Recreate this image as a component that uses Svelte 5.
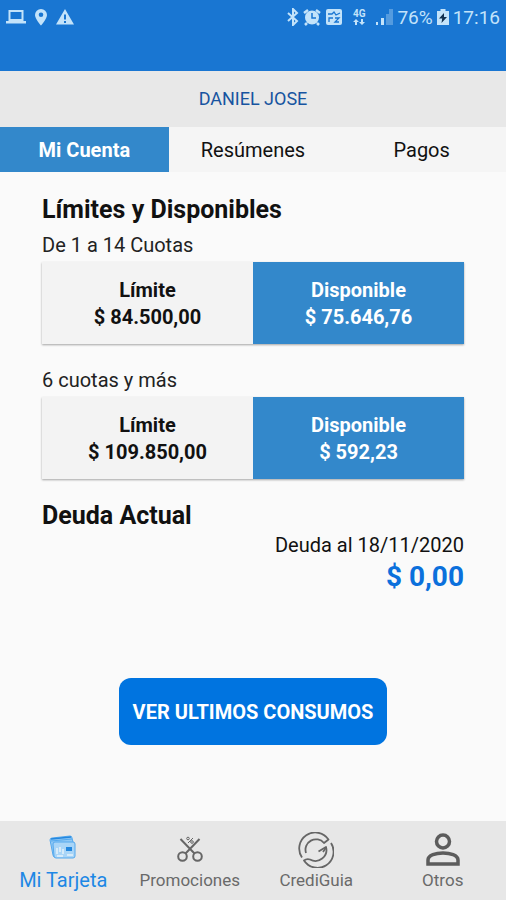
<script>
  const tabs = ['Mi Cuenta', 'Resúmenes', 'Pagos'];
  let tab = $state('Mi Cuenta');

  const limits = [
    { title: 'De 1 a 14 Cuotas', limit: '$ 84.500,00', available: '$ 75.646,76' },
    { title: '6 cuotas y más', limit: '$ 109.850,00', available: '$ 592,23' }
  ];

  const sections = [
    { name: 'Mi Tarjeta', icon: 'card' },
    { name: 'Promociones', icon: 'scissors' },
    { name: 'CrediGuia', icon: 'guide' },
    { name: 'Otros', icon: 'person' }
  ];
  let section = $state('Mi Tarjeta');
</script>

<div class="app">
  <header>
    <div class="status">
      <div class="group left">
        <svg width="20" height="18" viewBox="0 0 20 18"><path d="M3.500 3h13v9h-13z" fill="none" stroke="currentColor" stroke-width="2" /><path d="M0 13h20v2.500H0z" fill="currentColor" /></svg>
        <svg width="12" height="18" viewBox="0 0 12 18"><path fill="currentColor" fill-rule="evenodd" d="M6 1a6 6 0 0 0-6 6c0 4 6 10.500 6 10.500S12 11 12 7a6 6 0 0 0-6-6zm0 3.500a2.300 2.300 0 1 1 0 4.600 2.300 2.300 0 0 1 0-4.600z" /></svg>
        <svg width="18" height="18" viewBox="0 0 18 18"><path fill="currentColor" fill-rule="evenodd" d="M9 1l9 15.500H0zM8 6.500v5h2v-5zm0 6.500v2h2v-2z" /></svg>
      </div>
      <div class="group right">
        <svg width="12" height="18" viewBox="0 0 12 18"><path d="M1 5l9 8-4 4V1l4 4-9 8" fill="none" stroke="currentColor" stroke-width="2" /></svg>
        <svg width="18" height="18" viewBox="0 0 18 18"><circle cx="9" cy="9.500" r="7" fill="currentColor" /><path d="M1 5l4-3M17 5l-4-3M4 15l-2 2M14 15l2 2" stroke="currentColor" stroke-width="2.500" /><path d="M9 5v5h4" fill="none" stroke="#1976d2" stroke-width="1.500" /></svg>
        <svg width="18" height="18" viewBox="0 0 18 18"><rect x="1" y="1" width="16" height="16" rx="2" fill="currentColor" /><path d="M3 6h4l2-2 2 3 4-2M4 14v-4h4M10 10h4l-4 4h4" fill="none" stroke="#1976d2" stroke-width="1.300" /></svg>
        <span class="network"><small>4G</small><svg width="12" height="6" viewBox="0 0 12 6"><path d="M3 0l3 3H4v3H2V3H0zM9 6L6 3h2V0h2v3h2z" fill="currentColor" /></svg></span>
        <svg width="18" height="18" viewBox="0 0 18 18"><path d="M1 14h2v3H1zM6 10h3v7H6z" fill="currentColor" /><path d="M11 6h3v11h-3zM14 1h4v16h-4z" fill="currentColor" opacity=".35" /></svg>
        <span>76%</span>
        <svg width="12" height="18" viewBox="0 0 12 18"><path d="M3.500 1h5v2H12v14H0V3h3.500z" fill="currentColor" /><path d="M7 5L2 10.500h3.200L4.500 15 10 9H7z" fill="#12314f" /></svg>
        <time>17:16</time>
      </div>
    </div>
  </header>

  <div class="holder">DANIEL JOSE</div>

  <div class="tabs" role="tablist">
    {#each tabs as name}
      <button role="tab" aria-selected={tab === name} class:active={tab === name} onclick={() => (tab = name)}>{name}</button>
    {/each}
  </div>

  <main>
    <h2>Límites y Disponibles</h2>
    {#each limits as item}
      <section class="limit">
        <h3>{item.title}</h3>
        <div class="pair">
          <div class="cell">Límite<br />{item.limit}</div>
          <div class="cell available">Disponible<br />{item.available}</div>
        </div>
      </section>
    {/each}

    <h2>Deuda Actual</h2>
    <div class="debt">
      <p>Deuda al 18/11/2020</p>
      <strong>$ 0,00</strong>
    </div>

    <button class="primary">VER ULTIMOS CONSUMOS</button>
  </main>

  <nav>
    {#each sections as item}
      <button class:active={section === item.name} onclick={() => (section = item.name)}>
        {#if item.icon === 'card'}
          <svg width="28" height="36" viewBox="0 0 28 36">
            <path d="M1 8q0-2 2-2l18-2q2 0 2 2l1 4 1 13q0 2-2 2H6q-2 0-2-2z" fill="#90c8f4" stroke="#54a9ee" />
            <path d="M2 9l21-2M4 12q0-2 2-2h18q2 0 2 2v12q0 2-2 2H7q-2 0-2-2z" fill="#a9d5f7" stroke="#54a9ee" />
            <path d="M2 7l20-2" stroke="#2387df" stroke-width="1.500" />
            <path d="M17 15h6v4h-6z" fill="#2387df" />
            <path d="M8 16v6M11 15v5M14 17v5M8 24h6M18 23h6" stroke="#e5f2fc" stroke-width="1.500" />
          </svg>
        {:else if item.icon === 'scissors'}
          <svg width="26" height="36" viewBox="0 0 26 36" fill="none" stroke="#666" stroke-width="2">
            <circle cx="5.500" cy="24.500" r="4.300" /><circle cx="20.500" cy="24.500" r="4.300" />
            <path d="M8.500 21.500L22.500 7M17.500 21.500L3.500 7" />
            <path d="M11 11l5-5" stroke-width="1" /><circle cx="11" cy="6.500" r="1.300" stroke-width="1" /><circle cx="15" cy="10" r="1.300" stroke-width="1" />
          </svg>
        {:else if item.icon === 'guide'}
          <svg width="36" height="36" viewBox="0 0 36 36" fill="none" stroke="#666" stroke-width="1.800" stroke-linejoin="round">
            <path d="M4 25.500A16 16 0 0 1 30.500 7.500l-4.500 3.500A10.500 10.500 0 0 0 8 21" />
            <path d="M33 11A16 16 0 0 1 6 28.500q2.500-2 6-1A11 11 0 0 0 28 15l-7.500 4.500" />
            <path d="M28 15a18 18 0 0 1-3 5" />
          </svg>
        {:else}
          <svg width="36" height="36" viewBox="0 0 36 36" fill="none" stroke="#5c5c5c" stroke-width="3.500">
            <circle cx="18" cy="9.500" r="6.500" /><path d="M3 32v-4c0-5 8-7 15-7s15 2 15 7v4z" />
          </svg>
        {/if}
        <span>{item.name}</span>
      </button>
    {/each}
  </nav>
</div>

<style>
  :global(body) { margin: 0; background: #fafafa; }
  .app {
    min-height: 100vh;
    display: flex;
    flex-direction: column;
    font-family: Roboto, "Liberation Sans", sans-serif;
    font-size: 20px;
    color: #111;
  }
  button { border: 0; padding: 0; background: none; font: inherit; color: inherit; cursor: pointer; }
  header { background: #1976d2; height: 71px; }
  .status {
    display: flex;
    justify-content: space-between;
    height: 34px;
    padding: 0 6px;
    font-size: 19px;
    color: #c3e3fa;
  }
  .group { display: flex; align-items: center; }
  .left { gap: 9px; }
  .right { gap: 4px; }
  .network { display: flex; flex-direction: column; align-items: center; width: 24px; }
  .network small { font-size: 10px; line-height: 10px; font-weight: 700; }
  .holder { background: #e8e8e8; color: #1754a0; text-align: center; font-size: 18px; line-height: 56px; }
  .tabs { display: flex; background: #f5f5f5; }
  .tabs button { flex: 1; padding-top: 1px; line-height: 44px; }
  .tabs .active { background: #3388cb; color: #fff; font-weight: 700; }
  main { flex: 1; display: flex; flex-direction: column; padding: 20px 42px; }
  h2, h3, p { margin: 0; }
  h2 { font-size: 25px; line-height: 36px; }
  h3 { font-size: 20px; line-height: 34px; font-weight: 400; color: #222; }
  .limit { margin-bottom: 19px; }
  .pair { display: flex; box-shadow: 0 1px 2px rgba(0, 0, 0, 0.35); }
  .cell { flex: 1; padding: 15px 0 13px; text-align: center; font-weight: 700; line-height: 27px; background: #f3f3f3; }
  .available { background: #3388cb; color: #fff; }
  .debt { text-align: right; }
  .debt p { line-height: 22px; }
  .debt strong { display: block; font-size: 28px; line-height: 42px; color: #0b70dc; }
  .primary {
    align-self: center;
    margin-top: 80px;
    padding: 2px 14px 0;
    line-height: 65px;
    border-radius: 12px;
    background: #0074e0;
    color: #fff;
    font-weight: 700;
  }
  nav { display: flex; background: #e7e7e7; height: 79px; }
  nav button { flex: 1; display: flex; flex-direction: column; align-items: center; padding-top: 11px; font-size: 17px; line-height: 25px; color: #6a6a6a; }
  nav svg { flex: none; }
  nav .active { font-size: 20px; color: #1e88e5; }
</style>
